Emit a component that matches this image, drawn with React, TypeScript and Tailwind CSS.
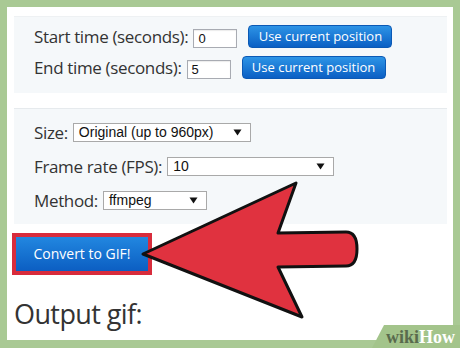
import React from 'react';

const Caret: React.FC = () => (
  <svg width="9" height="7" viewBox="0 0 9 7" className="shrink-0">
    <path d="M0.5 0.5h8L4.5 6.5z" fill="#111" />
  </svg>
);

const Select: React.FC<{ value: string; width: string }> = ({ value, width }) => (
  <div
    className={`ml-[5px] flex h-[19px] items-center justify-between border border-[#a9a9a9] bg-white pl-[5px] pr-[8px] font-['Liberation_Sans',Arial,sans-serif] text-[14px] text-[#111] ${width}`}
  >
    <span>{value}</span>
    <Caret />
  </div>
);

const TimeRow: React.FC<{ label: string; value: string }> = ({ label, value }) => (
  <div className="flex h-[23px] items-end">
    <span className="self-center text-[17px] leading-none tracking-[-0.35px] text-[#333]">{label}</span>
    <div className="ml-[5px] flex h-[19px] w-[44px] items-center border border-[#a8abb2] bg-white pl-[4px] font-['Liberation_Sans',Arial,sans-serif] text-[13px] text-[#111] shadow-[inset_0_1px_1px_rgba(0,0,0,0.08)]">
      {value}
    </div>
    <button className="ml-[11px] h-[23px] w-[144px] rounded-[4px] border border-[#0b59b5] bg-gradient-to-b from-[#2d94e6] to-[#0b5fc4] text-[13px] leading-none text-white">
      Use current position
    </button>
  </div>
);

export default function App() {
  return (
    <div className="relative h-[348px] w-[460px] overflow-hidden bg-[#a9c994] px-[7px] pt-[7px] font-['Open_Sans',sans-serif]">
      <div className="h-[333px] bg-white pl-[7px] pr-[6px] pt-[9px]">
        <div className="flex h-[77px] flex-col gap-[8px] border-t border-[#eef1f3] bg-[#f5f8fa] pl-[20px] pt-[8px]">
          <TimeRow label="Start time (seconds):" value="0" />
          <TimeRow label="End time (seconds):" value="5" />
        </div>

        <div className="mt-[15px] flex h-[116px] flex-col gap-[15px] border-t border-[#e6eaed] bg-[#f5f8fa] pl-[20px] pt-[14px]">
          <div className="flex h-[19px] items-center">
            <span className="text-[17px] leading-none tracking-[-0.35px] text-[#333]">Size:</span>
            <Select value="Original (up to 960px)" width="w-[178px]" />
          </div>
          <div className="flex h-[19px] items-center">
            <span className="text-[17px] leading-none tracking-[-0.35px] text-[#333]">Frame rate (FPS):</span>
            <Select value="10" width="w-[167px]" />
          </div>
          <div className="flex h-[19px] items-center">
            <span className="text-[17px] leading-none tracking-[-0.35px] text-[#333]">Method:</span>
            <Select value="ffmpeg" width="w-[104px]" />
          </div>
        </div>

        <div className="ml-[-2px] mt-[9px] h-[42px] w-[140px] border-4 border-[#d82c3c]">
          <button className="h-full w-full bg-gradient-to-b from-[#2287e0] to-[#0c5ec2] text-[14px] leading-none text-white">
            Convert to GIF!
          </button>
        </div>

        <div className="mt-[25px] text-[27px] leading-none tracking-[-0.6px] text-[#333]">Output gif:</div>
      </div>

      <svg className="absolute inset-0" width="460" height="348" viewBox="0 0 460 348">
        <path
          d="M143 254 L296 183 L278 233 L346 232 Q357 232 357 249 Q357 266 346 266 L278 267 L302 317 Z"
          fill="#e0323f"
          stroke="#111"
          strokeWidth="3"
          strokeLinejoin="round"
        />
      </svg>

      <div className="absolute bottom-0 right-0 flex h-[23px] w-[88px] items-center justify-end bg-[#a3c48b] pr-[5px] [clip-path:polygon(12px_0,100%_0,100%_100%,0_100%)]">
        <span className="font-['Liberation_Serif',serif] text-[18px] font-bold leading-none">
          <span className="text-[#596a4d]">wiki</span>
          <span className="text-white">How</span>
        </span>
      </div>
    </div>
  );
}
